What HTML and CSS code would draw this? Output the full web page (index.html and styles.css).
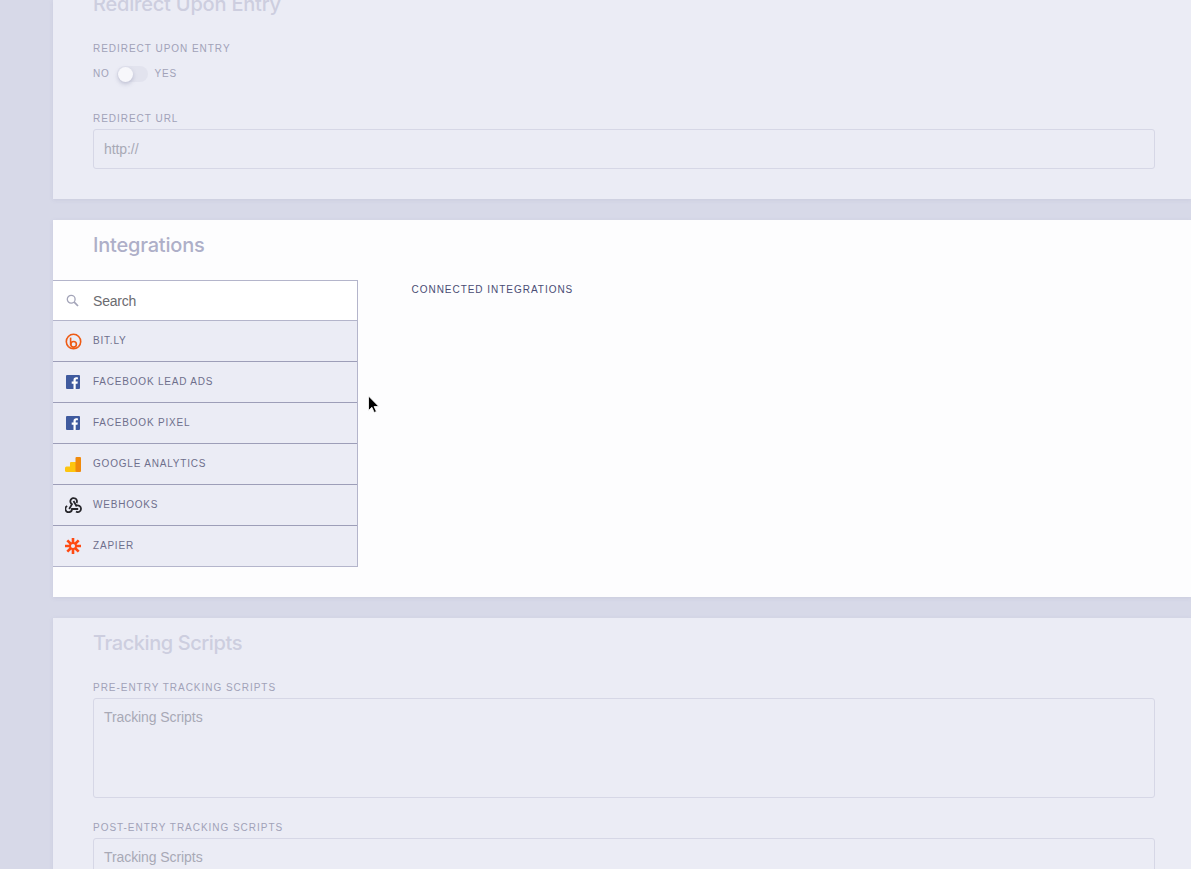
FILE: index.html
```html
<!DOCTYPE html>
<html lang="en">
<head>
<meta charset="utf-8">
<title>Integrations</title>
<link rel="stylesheet" href="styles.css">
</head>
<body>
<main class="page">
  <section class="panel panel-dim panel-first">
    <h2 class="title title-clipped">Redirect Upon Entry</h2>
    <label class="label label-first">Redirect Upon Entry</label>
    <div class="toggle-row">
      <span class="toggle-text">No</span>
      <span class="toggle"><span class="knob"></span></span>
      <span class="toggle-text">Yes</span>
    </div>
    <label class="label label-url">Redirect URL</label>
    <div class="field">http://</div>
  </section>

  <section class="panel panel-active">
    <h2 class="title">Integrations</h2>
    <div class="integrations">
      <div class="list">
        <div class="search">
          <span class="icon-slot icon-slot-search">
            <svg width="13" height="13" viewBox="0 0 13 13" fill="none" stroke="#a3a4b8" stroke-width="1.3"><circle cx="5.2" cy="5.2" r="3.9"/><path d="M8.2 8.2 12 12" stroke-width="1.7"/></svg>
          </span>
          <span class="search-text">Search</span>
        </div>
        <div class="row">
          <span class="icon-slot">
            <svg width="17" height="17" viewBox="0 0 17 17" fill="none" stroke="#ee5a13" stroke-width="1.6"><path d="M3.6 13.800A7.200 7.200 0 1 1 13.400 13.800"/><path d="M3.600 13.800A7.200 7.200 0 0 0 13.400 13.800" /><path d="M5.600 4.600v7.600"/><circle cx="8.600" cy="11.300" r="2.800"/></svg>
          </span>
          <span class="row-text">Bit.ly</span>
        </div>
        <div class="row">
          <span class="icon-slot">
            <svg width="14" height="14" viewBox="0 0 14 14"><rect width="14" height="14" rx="1" fill="#3f5a9e"/><path d="M9.700 14V8.700h1.800l.3-2.100H9.700V5.300c0-.6.2-1 1-1h1.200V2.400c-.2 0-.9-.1-1.700-.1-1.600 0-2.700 1-2.700 2.800v1.500H5.700v2.100h1.800V14z" fill="#fff"/></svg>
          </span>
          <span class="row-text">Facebook Lead Ads</span>
        </div>
        <div class="row">
          <span class="icon-slot">
            <svg width="14" height="14" viewBox="0 0 14 14"><rect width="14" height="14" rx="1" fill="#3f5a9e"/><path d="M9.700 14V8.700h1.800l.3-2.100H9.700V5.300c0-.6.2-1 1-1h1.200V2.400c-.2 0-.9-.1-1.700-.1-1.600 0-2.700 1-2.700 2.800v1.500H5.700v2.100h1.800V14z" fill="#fff"/></svg>
          </span>
          <span class="row-text">Facebook Pixel</span>
        </div>
        <div class="row">
          <span class="icon-slot">
            <svg width="16" height="15" viewBox="0 0 16 15"><rect x="0" y="9.500" width="6.500" height="5.500" rx="1.500" fill="#fdc50f"/><rect x="5" y="5" width="6.500" height="10" rx="1" fill="#fdc50f"/><rect x="10.500" y="0" width="5.500" height="15" rx="1" fill="#f08a0c"/></svg>
          </span>
          <span class="row-text">Google Analytics</span>
        </div>
        <div class="row">
          <span class="icon-slot">
            <svg width="17" height="16" viewBox="0 0 17 16" fill="none" stroke="#26262b" stroke-width="1.800"><path d="M4.200 12 7 7.200A3.300 3.300 0 1 1 11.500 6"/><path d="M8.500 4 11.300 8.800A3.300 3.300 0 1 1 11 14.600"/><path d="M13.200 12H7A3.300 3.300 0 1 1 2.200 9"/></svg>
          </span>
          <span class="row-text">Webhooks</span>
        </div>
        <div class="row">
          <span class="icon-slot">
            <svg width="16" height="16" viewBox="0 0 16 16" fill="none" stroke="#ff4a12" stroke-width="2.600"><path d="M8 0v5.200M8 10.800V16M0 8h5.200M10.800 8H16M2.300 2.300l3.700 3.700M10 10l3.700 3.700M13.700 2.300 10 6M6 10l-3.700 3.700"/><circle cx="8" cy="8" r="2.900" stroke-width="1.700"/></svg>
          </span>
          <span class="row-text">Zapier</span>
        </div>
      </div>
      <div class="connected">Connected Integrations</div>
    </div>
    <svg class="cursor" width="13" height="20" viewBox="0 0 13 20"><path d="M1.500 1v14.500l3.400-3.200 2.300 5.200 2.200-1-2.300-5h4.700z" fill="#000" stroke="#fff" stroke-width=".8"/></svg>
  </section>

  <section class="panel panel-dim">
    <h2 class="title title-tracking">Tracking Scripts</h2>
    <label class="label label-pre">Pre-Entry Tracking Scripts</label>
    <div class="field field-tall">Tracking Scripts</div>
    <label class="label label-post">Post-Entry Tracking Scripts</label>
    <div class="field field-tall">Tracking Scripts</div>
  </section>
</main>
</body>
</html>
```
FILE: styles.css
```css
* {
  box-sizing: border-box;
}

html,
body {
  height: 869px;
  margin: 0;
  overflow: hidden;
  background: #d7d9e8;
}

body {
  font-family: "Liberation Sans", Arial, sans-serif;
}

.page {
  display: flex;
  flex-direction: column;
  gap: 21px;
  padding-left: 53px;
}

.panel {
  position: relative;
  padding: 0 36px 0 40px;
  box-shadow: 0 1px 4px rgba(120, 122, 160, 0.14);
}

.panel-dim {
  background: #ebecf5;
}

.panel-first {
  height: 199px;
}

.panel-active {
  height: 377px;
  background: #fdfdfe;
  padding: 0;
}

.title {
  margin: 0;
  padding-top: 13px;
  font-family: "Inter", "Lato", sans-serif;
  font-size: 20px;
  line-height: 24px;
  font-weight: 500;
  letter-spacing: -0.2px;
  color: #cdcedf;
}

.title-clipped {
  margin-top: -8px;
  padding-top: 0;
}

.title-tracking {
  letter-spacing: -0.42px;
}

.panel-active .title {
  margin-left: 40px;
  color: #aeafc8;
}

.label {
  display: block;
  font-size: 10px;
  line-height: 12px;
  letter-spacing: 0.97px;
  text-transform: uppercase;
  color: #a1a2b8;
}

.label-first {
  margin-top: 27px;
}

.label-url {
  margin-top: 31px;
  margin-bottom: 4px;
}

.label-pre {
  margin-top: 27px;
  margin-bottom: 4px;
}

.label-post {
  margin-top: 24px;
  margin-bottom: 4px;
}

.toggle-row {
  display: flex;
  align-items: center;
  gap: 7px;
  margin-top: 11px;
  height: 16px;
}

.toggle-text {
  font-size: 10px;
  line-height: 12px;
  letter-spacing: 0.8px;
  text-transform: uppercase;
  color: #a1a2b8;
}

.toggle {
  position: relative;
  width: 31px;
  height: 16px;
  border-radius: 8px;
  background: #e2e3ee;
}

.knob {
  position: absolute;
  left: 1px;
  top: 0.5px;
  width: 15px;
  height: 15px;
  border-radius: 50%;
  background: #f7f7fb;
  box-shadow: 0 2px 4px rgba(110, 112, 150, 0.35);
}

.field {
  height: 40px;
  padding: 0 10px;
  border: 1px solid #d6d7e6;
  border-radius: 3px;
  font-size: 14px;
  line-height: 38px;
  letter-spacing: -0.08px;
  color: #a8a9b6;
}

.field-tall {
  height: 100px;
  line-height: 36px;
}

.integrations {
  display: flex;
  margin-top: 23px;
}

.list {
  width: 305px;
  border: solid #b4b5cb;
  border-width: 1px 1px 0 0;
}

.search {
  display: flex;
  align-items: center;
  height: 40px;
  background: #fff;
  border-bottom: 1px solid #b4b5cb;
}

.search-text {
  font-size: 14px;
  letter-spacing: -0.2px;
  color: #6b6b70;
}

.icon-slot {
  display: flex;
  align-items: center;
  justify-content: center;
  flex: none;
  width: 40px;
}

.icon-slot-search {
  padding-right: 2px;
}

.row {
  display: flex;
  align-items: center;
  height: 41px;
  background: #ebecf5;
  border-bottom: 1px solid #9d9eb8;
}

.row:last-child {
  border-bottom-color: #b4b5cb;
}

.row-text {
  font-size: 10px;
  line-height: 12px;
  letter-spacing: 0.8px;
  text-transform: uppercase;
  color: #6e6f8c;
}

.connected {
  margin: 4px 0 0 53.5px;
  font-size: 10px;
  line-height: 12px;
  letter-spacing: 0.97px;
  text-transform: uppercase;
  color: #4a4c74;
}

.cursor {
  position: absolute;
  left: 314px;
  top: 175px;
}
```
